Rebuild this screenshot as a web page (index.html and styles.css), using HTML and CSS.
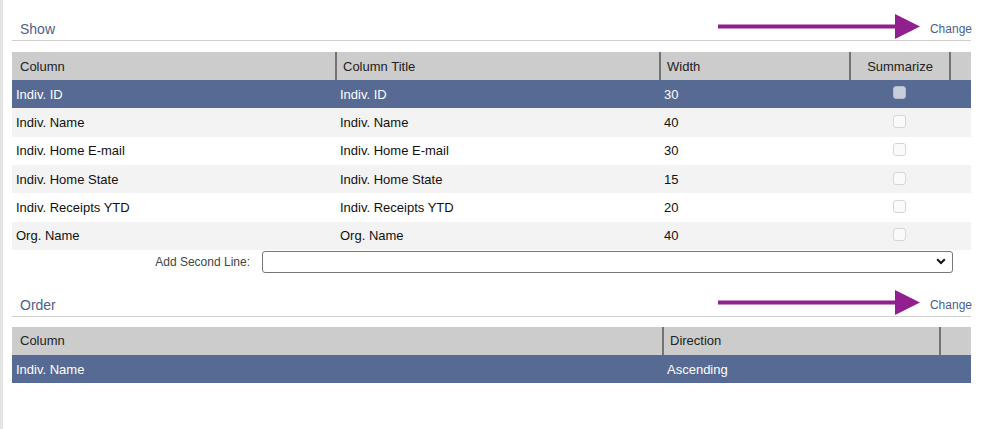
FILE: index.html
```html
<!DOCTYPE html>
<html>
<head>
<meta charset="utf-8">
<link rel="stylesheet" href="styles.css">
</head>
<body>
<div class="page">
  <section class="section">
    <div class="section-head">
      <span class="section-title">Show</span>
      <svg class="arrow" viewBox="0 0 202 25" width="202" height="25"><rect x="0" y="10.5" width="180" height="4"/><polygon points="177,0 202,12.5 177,25"/></svg>
      <a class="change">Change</a>
    </div>
    <div class="grid show-grid">
      <div class="row head-row">
        <div class="th">Column</div>
        <div class="th sep">Column Title</div>
        <div class="th sep">Width</div>
        <div class="th sep center">Summarize</div>
        <div class="th sep"></div>
      </div>
      <div class="row selected">
        <div class="td first">Indiv. ID</div><div class="td">Indiv. ID</div><div class="td">30</div><div class="td center"><span class="cb"></span></div><div class="td"></div>
      </div>
      <div class="row alt">
        <div class="td first">Indiv. Name</div><div class="td">Indiv. Name</div><div class="td">40</div><div class="td center"><span class="cb"></span></div><div class="td"></div>
      </div>
      <div class="row">
        <div class="td first">Indiv. Home E-mail</div><div class="td">Indiv. Home E-mail</div><div class="td">30</div><div class="td center"><span class="cb"></span></div><div class="td"></div>
      </div>
      <div class="row alt">
        <div class="td first">Indiv. Home State</div><div class="td">Indiv. Home State</div><div class="td">15</div><div class="td center"><span class="cb"></span></div><div class="td"></div>
      </div>
      <div class="row">
        <div class="td first">Indiv. Receipts YTD</div><div class="td">Indiv. Receipts YTD</div><div class="td">20</div><div class="td center"><span class="cb"></span></div><div class="td"></div>
      </div>
      <div class="row alt">
        <div class="td first">Org. Name</div><div class="td">Org. Name</div><div class="td">40</div><div class="td center"><span class="cb"></span></div><div class="td"></div>
      </div>
    </div>
    <div class="second-line">
      <label class="second-label">Add Second Line:</label>
      <div class="select-box">
        <svg class="chev" viewBox="0 0 10 7" width="10" height="7"><path d="M1.2 1.3 L5 5 L8.8 1.3" fill="none" stroke="#111" stroke-width="2"/></svg>
      </div>
    </div>
  </section>

  <section class="section order">
    <div class="section-head">
      <span class="section-title">Order</span>
      <svg class="arrow" viewBox="0 0 202 25" width="202" height="25"><rect x="0" y="10.5" width="180" height="4"/><polygon points="177,0 202,12.5 177,25"/></svg>
      <a class="change">Change</a>
    </div>
    <div class="grid order-grid">
      <div class="row head-row">
        <div class="th">Column</div>
        <div class="th sep">Direction</div>
        <div class="th sep"></div>
      </div>
      <div class="row selected">
        <div class="td first">Indiv. Name</div><div class="td">Ascending</div><div class="td"></div>
      </div>
    </div>
  </section>
</div>
</body>
</html>
```

FILE: styles.css
```css
html, body {
  margin: 0;
  padding: 0;
  background: #fff;
}
body {
  font-family: "Liberation Sans", Arial, sans-serif;
  color: #111;
}
.page {
  min-height: 429px;
  box-sizing: border-box;
  border-left: 3px solid #e4e4e4;
  padding: 0 10px 0 9px;
}
.section-head {
  display: flex;
  align-items: flex-end;
  box-sizing: border-box;
  height: 41px;
  border-bottom: 1px solid #cfcfcf;
  padding: 0 0 3px 8px;
}
.section-title {
  font-size: 14px;
  line-height: 16px;
  color: #4d5f8c;
  flex: 1;
}
.arrow {
  fill: #911f8f;
  margin-bottom: -2px;
  flex: none;
}
.change {
  font-size: 12px;
  line-height: 16px;
  color: #4d5d8c;
  margin-left: 10px;
  margin-right: -1px;
  cursor: pointer;
}
.grid {
  margin-top: 11px;
}
.row {
  display: grid;
  height: 28.34px;
  align-items: center;
  font-size: 13px;
}
.show-grid .row {
  grid-template-columns: 323px 324px 190px 100px 1fr;
}
.order-grid .row {
  grid-template-columns: 650px 277px 1fr;
}
.head-row {
  height: 28px;
  background: #cccccc;
  align-items: stretch;
  color: #222;
}
.th {
  display: flex;
  align-items: center;
  box-sizing: border-box;
  padding-left: 8px;
}
.th.sep {
  border-left: 2px solid #737373;
  padding-left: 6px;
}
.th.center, .td.center {
  justify-content: center;
  padding-left: 0;
}
.td {
  display: flex;
  align-items: center;
  height: 100%;
  padding-left: 5px;
  white-space: nowrap;
}
.td.first {
  padding-left: 4px;
}
.selected {
  background: #576a93;
  color: #fff;
}
.alt {
  background: #f3f3f3;
}
.cb {
  display: block;
  width: 11px;
  height: 11px;
  border: 1px solid #d6d6d6;
  border-radius: 3px;
  background: #fafafa;
  margin-bottom: 2px;
}
.selected .cb {
  background: #c8cedb;
  border-color: #b2bacb;
  margin-bottom: 4px;
}
.second-line {
  display: flex;
  align-items: center;
  margin-top: 1px;
  height: 22px;
}
.second-label {
  width: 238px;
  text-align: right;
  font-size: 12px;
  color: #444;
  flex: none;
}
.select-box {
  margin-left: 12px;
  width: 691px;
  height: 22px;
  box-sizing: border-box;
  border: 1px solid #777;
  border-radius: 3px;
  background: #fff;
  display: flex;
  align-items: center;
  justify-content: flex-end;
  padding-right: 6px;
}
.order {
  margin-top: 3px;
}
.order .grid {
  margin-top: 10px;
}
```
